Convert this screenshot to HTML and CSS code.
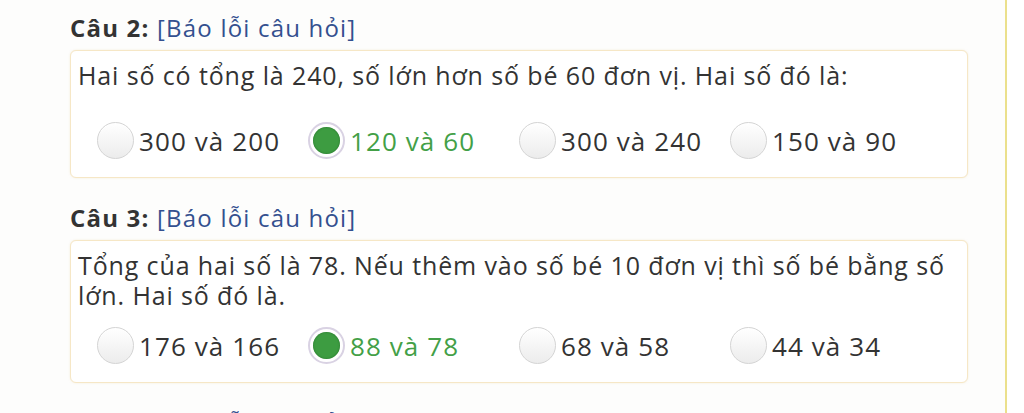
FILE: index.html
```html
<!DOCTYPE html>
<html lang="vi">
<head>
<meta charset="utf-8">
<title>Câu hỏi</title>
<link rel="stylesheet" href="styles.css">
</head>
<body>
<div class="page">
  <div class="col">
    <div class="q">
      <div class="q-title"><b>Câu 2:</b> <a href="#">[Báo lỗi câu hỏi]</a></div>
      <div class="q-box">
        <div class="q-text spaced">Hai số có tổng là 240, số lớn hơn số bé 60 đơn vị. Hai số đó là:</div>
        <div class="opts">
          <label class="opt"><span class="radio"></span><span>300 và 200</span></label>
          <label class="opt correct"><span class="radio on"></span><span>120 và 60</span></label>
          <label class="opt"><span class="radio"></span><span>300 và 240</span></label>
          <label class="opt"><span class="radio"></span><span>150 và 90</span></label>
        </div>
      </div>
    </div>
    <div class="q">
      <div class="q-title"><b>Câu 3:</b> <a href="#">[Báo lỗi câu hỏi]</a></div>
      <div class="q-box">
        <div class="q-text">Tổng của hai số là 78. Nếu thêm vào số bé 10 đơn vị thì số bé bằng số lớn. Hai số đó là.</div>
        <div class="opts">
          <label class="opt"><span class="radio"></span><span>176 và 166</span></label>
          <label class="opt correct"><span class="radio on"></span><span>88 và 78</span></label>
          <label class="opt"><span class="radio"></span><span>68 và 58</span></label>
          <label class="opt"><span class="radio"></span><span>44 và 34</span></label>
        </div>
      </div>
    </div>
    <div class="q">
      <div class="q-title"><b>Câu 4:</b> <a href="#">[Báo lỗi câu hỏi]</a></div>
    </div>
  </div>
</div>
</body>
</html>
```
FILE: styles.css
```css
html, body {
  margin: 0;
  padding: 0;
  background: #ffffff;
}
body {
  font-family: "Open Sans", "Noto Sans", sans-serif;
  color: #333333;
  overflow: hidden;
  height: 413px;
}
.page {
  display: flex;
  height: 413px;
  overflow: hidden;
}
.col {
  width: 1007px;
  box-sizing: border-box;
  border-right: 2px solid #ebe08c;
  background: #fdfdfc;
  padding: 13px 0 0 70px;
}
.q {
  width: 898px;
  margin-bottom: 25px;
}
.q-title {
  font-size: 24px;
  line-height: 30px;
  letter-spacing: 1.2px;
  color: #333;
}
.q-title b {
  font-weight: 700;
}
.q-title a {
  color: #34508f;
  text-decoration: none;
}
.q-box {
  margin-top: 7px;
  background: #ffffff;
  border: 1.5px solid #f6e7c6;
  border-radius: 6px;
  box-shadow: 0 0 2px rgba(240, 220, 180, 0.5);
  padding: 9px 8px 18px 7px;
}
.q-text {
  font-size: 25px;
  line-height: 30px;
  letter-spacing: 0.88px;
}
.q-text.spaced {
  margin-bottom: 32px;
}
.q-text + .opts {
  margin-top: 17px;
}
.q-text.spaced + .opts {
  margin-top: 0;
}
.opts {
  display: grid;
  grid-template-columns: repeat(4, 211px);
  padding-left: 19px;
}
.opt {
  display: flex;
  align-items: center;
  gap: 5px;
  font-size: 26px;
  line-height: 36px;
  letter-spacing: 1.1px;
  color: #333;
}
.opt.correct {
  color: #43a047;
}
.radio {
  width: 37px;
  height: 37px;
  box-sizing: border-box;
  border-radius: 50%;
  border: 1.5px solid #d4d4d4;
  background: linear-gradient(#ffffff, #ececec);
  box-shadow: inset 0 1px 1px rgba(255, 255, 255, 0.8);
  flex: none;
  position: relative;
}
.radio.on {
  border: 2px solid #d9d2e3;
  background: #ffffff;
}
.radio.on::after {
  content: "";
  position: absolute;
  left: 3px;
  top: 3px;
  width: 27px;
  height: 27px;
  border-radius: 50%;
  background: #3d9c41;
  box-shadow: inset 0 0 2px #1f6b24;
}
```
